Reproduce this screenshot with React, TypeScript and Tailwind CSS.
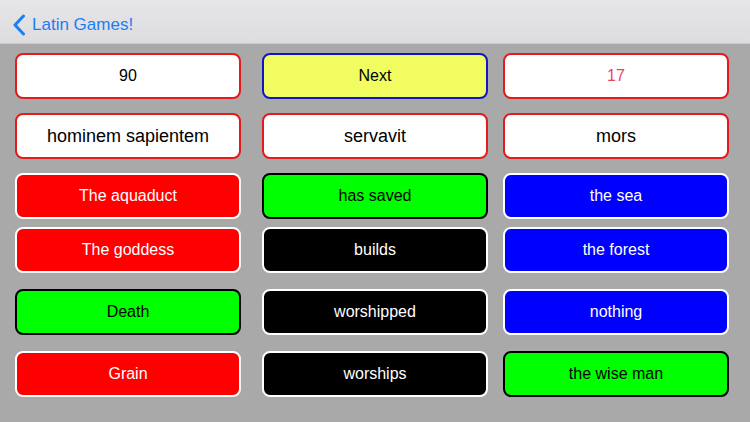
const rows: { mt: string; cells: { text: string; cls: string }[] }[] = [
  {
    mt: 'mt-[9px]',
    cells: [
      { text: '90', cls: 'bg-white border-[#e51a1a] text-black' },
      { text: 'Next', cls: 'bg-[#f0fc5f] border-[#1313c8] text-black' },
      { text: '17', cls: 'bg-white border-[#e51a1a] text-[#e94560]' },
    ],
  },
  {
    mt: 'mt-[14px]',
    cells: [
      { text: 'hominem sapientem', cls: 'bg-white border-[#e51a1a] text-black text-[18px]' },
      { text: 'servavit', cls: 'bg-white border-[#e51a1a] text-black text-[18px]' },
      { text: 'mors', cls: 'bg-white border-[#e51a1a] text-black text-[18px]' },
    ],
  },
  {
    mt: 'mt-[14px]',
    cells: [
      { text: 'The aquaduct', cls: 'bg-[#ff0000] border-white text-white' },
      { text: 'has saved', cls: 'bg-[#00ff00] border-black text-black' },
      { text: 'the sea', cls: 'bg-[#0000ff] border-white text-white' },
    ],
  },
  {
    mt: 'mt-[8px]',
    cells: [
      { text: 'The goddess', cls: 'bg-[#ff0000] border-white text-white' },
      { text: 'builds', cls: 'bg-black border-white text-white' },
      { text: 'the forest', cls: 'bg-[#0000ff] border-white text-white' },
    ],
  },
  {
    mt: 'mt-[16px]',
    cells: [
      { text: 'Death', cls: 'bg-[#00ff00] border-black text-black' },
      { text: 'worshipped', cls: 'bg-black border-white text-white' },
      { text: 'nothing', cls: 'bg-[#0000ff] border-white text-white' },
    ],
  },
  {
    mt: 'mt-[16px]',
    cells: [
      { text: 'Grain', cls: 'bg-[#ff0000] border-white text-white' },
      { text: 'worships', cls: 'bg-black border-white text-white' },
      { text: 'the wise man', cls: 'bg-[#00ff00] border-black text-black' },
    ],
  },
];

const colMargins = ['ml-[15px]', 'ml-[21px]', 'ml-[15px]'];

export default function App() {
  return (
    <div
      className="w-[750px] h-[422px] bg-[#a9a9a9] overflow-hidden"
      style={{ fontFamily: '"Liberation Sans", Arial, sans-serif' }}
    >
      <div className="h-[44px] bg-gradient-to-b from-[#e6e5e7] to-[#dedcde] flex items-center pl-[12px] pt-[7px] border-b border-[#c9c8ca]">
        <svg width="14" height="22" viewBox="0 0 14 22" className="mr-[6px]">
          <path d="M11.5 2 L3 11 L11.5 20" fill="none" stroke="#1a7ef5" strokeWidth="3" strokeLinecap="round" strokeLinejoin="round" />
        </svg>
        <span className="text-[17px] text-[#1a7ef5]">Latin Games!</span>
      </div>
      {rows.map((row, i) => (
        <div key={i} className={`flex ${row.mt}`}>
          {row.cells.map((c, j) => (
            <div
              key={j}
              className={`${colMargins[j]} w-[226px] h-[46px] border-2 rounded-[8px] flex items-center justify-center text-[16px] ${c.cls}`}
            >
              {c.text}
            </div>
          ))}
        </div>
      ))}
    </div>
  );
}
